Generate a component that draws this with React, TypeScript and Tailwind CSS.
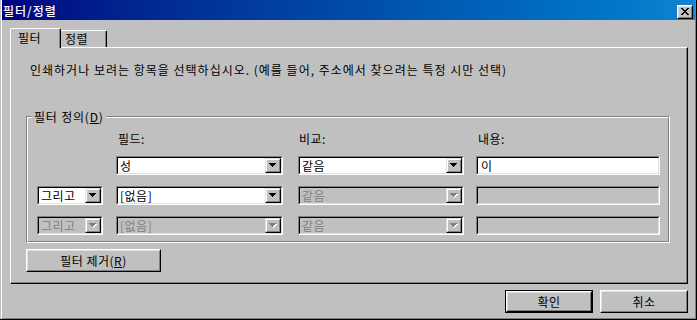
import React from "react";

const Arrow = ({ disabled }: { disabled?: boolean }) => (
    <svg width="8" height="5" viewBox="0 0 8 5" shapeRendering="crispEdges">
        {disabled && <path d="M1 1h7v1h-1v1h-1v1h-1v1h-1v-1h-1v-1h-1v-1h-1z" fill="#ffffff" />}
        <path d="M0 0h7v1h-1v1h-1v1h-1v1h-1v-1h-1v-1h-1v-1h-1z" fill={disabled ? "#808080" : "#000000"} />
    </svg>
);

const Sunken = ({ className, children }: { className: string; children?: React.ReactNode }) => (
    <div className={"border border-t-[#808080] border-l-[#808080] border-b-white border-r-white " + className}>
        <div className="h-full border border-t-black border-l-black border-b-[#dfdfdf] border-r-[#dfdfdf] flex">
            {children}
        </div>
    </div>
);

const Combo = ({ text, className, disabled }: { text: string; className: string; disabled?: boolean }) => (
    <Sunken className={className}>
        <div className={"flex-1 pl-[2px] leading-[15px] tracking-[0.5px] whitespace-nowrap overflow-hidden " + (disabled ? "bg-[#c0c0c0] text-[#808080]" : "bg-white text-black")}>
            {text}
        </div>
        <div className="w-[16px] h-full bg-[#c0c0c0] border border-t-[#dfdfdf] border-l-[#dfdfdf] border-b-black border-r-black">
            <div className="h-full border border-t-white border-l-white border-b-[#808080] border-r-[#808080] flex items-center justify-center">
                <Arrow disabled={disabled} />
            </div>
        </div>
    </Sunken>
);

const TextBox = ({ text, className, disabled }: { text?: string; className: string; disabled?: boolean }) => (
    <Sunken className={className}>
        <div className={"flex-1 pl-[3px] leading-[15px] " + (disabled ? "bg-[#c0c0c0]" : "bg-white")}>{text}</div>
    </Sunken>
);

const Button = ({ children, className, isDefault }: { children: React.ReactNode; className: string; isDefault?: boolean }) => (
    <div className={(isDefault ? "border border-black " : "") + className}>
        <div className="h-full border border-t-white border-l-white border-b-black border-r-black">
            <div className="h-full border border-t-[#dfdfdf] border-l-[#dfdfdf] border-b-[#808080] border-r-[#808080] flex items-center justify-center leading-[15px] tracking-[0.5px]">
                {children}
            </div>
        </div>
    </div>
);

export default function App() {
    return (
        <div className="w-[697px] h-[320px] bg-[#c0c0c0] pl-px border-r border-b border-black text-[12px] text-black font-['Noto_Sans_CJK_KR','Noto_Sans',sans-serif] select-none">
            <div className="h-full flex flex-col border-l border-r border-b border-l-white border-r-[#808080] border-b-[#808080]">
                {/* title bar */}
                <div className="h-[20px] flex items-center justify-between bg-linear-to-r from-[#000080] to-[#1084d0]">
                    <span className="pl-[1px] text-white leading-[15px] font-medium tracking-[1px]">필터/정렬</span>
                    <div className="mr-[2px] mt-[3px] w-[16px] h-[14px] bg-[#c0c0c0] border border-t-white border-l-white border-b-black border-r-black">
                        <div className="h-full border border-t-[#dfdfdf] border-l-[#dfdfdf] border-b-[#808080] border-r-[#808080] flex items-center justify-center">
                            <svg width="8" height="7" viewBox="0 0 8 7" shapeRendering="crispEdges">
                                <path
                                    d="M0 0h2v1h-2z M6 0h2v1h-2z M1 1h2v1h-2z M5 1h2v1h-2z M2 2h4v1h-4z M3 3h2v1h-2z M2 4h4v1h-4z M1 5h2v1h-2z M5 5h2v1h-2z M0 6h2v1h-2z M6 6h2v1h-2z"
                                    fill="#000"
                                />
                            </svg>
                        </div>
                    </div>
                </div>

                <div className="flex-1 pl-[8px] pr-[7px] pt-[8px]">
                    {/* tabs */}
                    <div className="h-[19px] flex items-end">
                        <div className="relative z-10 -mb-px w-[51px] h-[20px] pl-[7px] pt-[1px] leading-[15px] tracking-[0.5px] bg-[#c0c0c0] border-t border-l border-r border-t-white border-l-white border-r-black rounded-t-[2px] shadow-[inset_-1px_0_#808080]">
                            필터
                        </div>
                        <div className="w-[46px] h-[17px] pl-[4px] leading-[15px] tracking-[0.5px] border-t border-r border-t-white border-r-black rounded-tr-[2px] shadow-[inset_-1px_0_#808080]">
                            정렬
                        </div>
                    </div>

                    {/* panel */}
                    <div className="h-[237px] border border-t-white border-l-white border-b-black border-r-black">
                        <div className="h-full border-r border-b border-r-[#808080] border-b-[#808080] pt-[14px]">
                            <p className="pl-[19px] leading-[15px] whitespace-nowrap tracking-[1px]">
                                인쇄하거나 보려는 항목을 선택하십시오. (예를 들어, 주소에서 찾으려는 특정 시만 선택)
                            </p>

                            {/* group box */}
                            <div className="relative mt-[39px] ml-[15px] w-[644px] h-[127px] border border-t-[#808080] border-l-[#808080] border-b-white border-r-white">
                                <span className="absolute -top-[8px] left-[5px] px-[2px] bg-[#c0c0c0] leading-[15px] tracking-[0.8px]">
                                    필터 정의(<span className="underline">D</span>)
                                </span>
                                <div className="h-full border border-t-white border-l-white border-b-[#808080] border-r-[#808080] pt-[13px]">
                                    <div className="flex leading-[15px] tracking-[0.5px]">
                                        <span className="ml-[90px] w-[167px]">필드:</span>
                                        <span className="ml-[14px] w-[166px]">비교:</span>
                                        <span className="ml-[13px]">내용:</span>
                                    </div>
                                    <div className="flex mt-[10px] h-[19px]">
                                        <div className="ml-[9px] w-[66px]" />
                                        <Combo text="성" className="ml-[13px] w-[167px] h-[19px]" />
                                        <Combo text="같음" className="ml-[15px] w-[166px] h-[19px]" />
                                        <TextBox text="이" className="ml-[12px] w-[184px] h-[19px]" />
                                    </div>
                                    <div className="flex mt-[11px] h-[19px]">
                                        <Combo text="그리고" className="ml-[9px] w-[66px] h-[19px]" />
                                        <Combo text="[없음]" className="ml-[13px] w-[167px] h-[19px]" />
                                        <Combo text="같음" disabled className="ml-[15px] w-[166px] h-[19px]" />
                                        <TextBox disabled className="ml-[12px] w-[184px] h-[19px]" />
                                    </div>
                                    <div className="flex mt-[11px] h-[19px]">
                                        <Combo text="그리고" disabled className="ml-[9px] w-[66px] h-[19px]" />
                                        <Combo text="[없음]" disabled className="ml-[13px] w-[167px] h-[19px]" />
                                        <Combo text="같음" disabled className="ml-[15px] w-[166px] h-[19px]" />
                                        <TextBox disabled className="ml-[12px] w-[184px] h-[19px]" />
                                    </div>
                                </div>
                            </div>

                            <Button className="mt-[6px] ml-[15px] w-[135px] h-[23px]">
                                필터 제거(<span className="underline">R</span>)
                            </Button>
                        </div>
                    </div>

                    {/* dialog buttons */}
                    <div className="flex justify-end gap-[7px] mt-[6px]">
                        <Button isDefault className="w-[88px] h-[23px]">확인</Button>
                        <Button className="w-[88px] h-[23px]">취소</Button>
                    </div>
                </div>
            </div>
        </div>
    );
}
